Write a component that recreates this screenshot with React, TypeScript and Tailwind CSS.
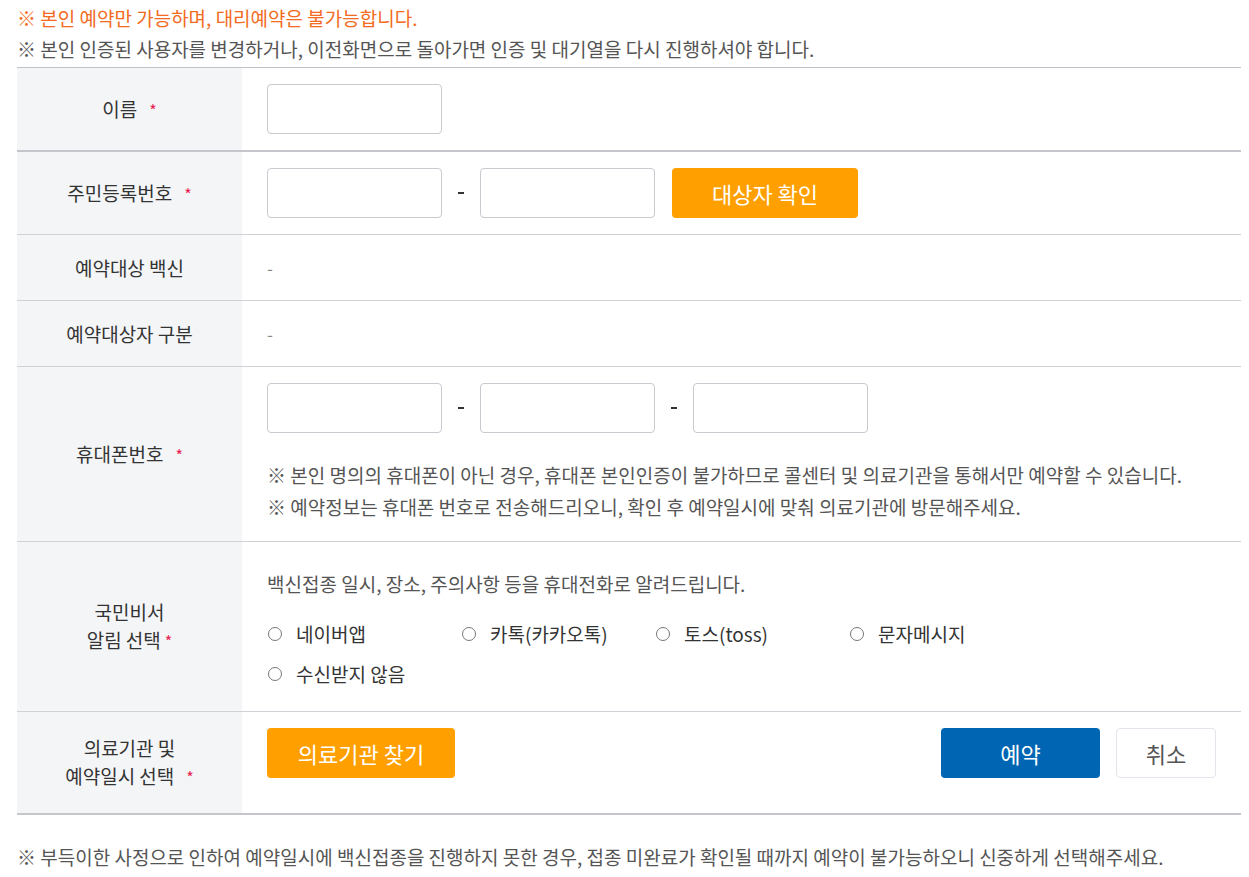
import type { ReactNode } from "react";

const FONT = { fontFamily: '"Noto Sans CJK KR", "Noto Sans", sans-serif' };

function Star() {
  return <span className="ml-3 text-[16px] text-[#e8204f]">*</span>;
}

function Row({
  label,
  children,
  h,
  border = "border-b border-[#cfd1d6]",
  cell = "",
}: {
  label: ReactNode;
  children: ReactNode;
  h: string;
  border?: string;
  cell?: string;
}) {
  return (
    <div className={`flex ${h} ${border}`}>
      <div className="flex w-[225px] shrink-0 items-center justify-center bg-[#f4f5f7] text-center text-[19px] leading-[28px] text-[#333]">
        {label}
      </div>
      <div className={`flex flex-1 flex-col justify-center pl-[25px] ${cell}`}>{children}</div>
    </div>
  );
}

function Input() {
  return <div className="h-[50px] w-[175px] shrink-0 rounded-[4px] border border-[#c8cad0] bg-white" />;
}

function Dash() {
  return (
    <span className="flex w-[38px] justify-center">
      <span className="h-[2px] w-[6px] bg-[#333]" />
    </span>
  );
}

function Radio({ label, w = "w-[194px]" }: { label: string; w?: string }) {
  return (
    <div className={`flex items-center ${w}`}>
      <span className="ml-[1px] h-[14px] w-[14px] rounded-full border border-[#777]" />
      <span className="ml-[14px] text-[19px] text-[#333]">{label}</span>
    </div>
  );
}

export default function App() {
  return (
    <div className="min-h-[877px] bg-white pl-[17px] pr-[8px] pt-[4px]" style={FONT}>
      <p className="text-[19px] leading-[28px] text-[#f26b21]">※ 본인 예약만 가능하며, 대리예약은 불가능합니다.</p>
      <p className="mt-[3px] text-[19px] leading-[28px] text-[#555]">
        ※ 본인 인증된 사용자를 변경하거나, 이전화면으로 돌아가면 인증 및 대기열을 다시 진행하셔야 합니다.
      </p>
      <div className="mt-[4px] w-[1224px] border-t border-[#bfc2c8]">
        <Row label={<span>이름<Star /></span>} h="h-[84px]" border="border-b-2 border-[#c4c6cb]">
          <Input />
        </Row>
        <Row label={<span>주민등록번호<Star /></span>} h="h-[83px]">
          <div className="flex items-center">
            <Input />
            <Dash />
            <Input />
            <button className="ml-[17px] h-[50px] w-[186px] rounded-[4px] bg-[#ff9f00] text-[22px] text-white">
              대상자 확인
            </button>
          </div>
        </Row>
        <Row label="예약대상 백신" h="h-[66px]">
          <span className="text-[17px] text-[#888]">-</span>
        </Row>
        <Row label="예약대상자 구분" h="h-[66px]">
          <span className="text-[17px] text-[#888]">-</span>
        </Row>
        <Row label={<span>휴대폰번호<Star /></span>} h="h-[175px]" cell="!justify-start pt-[16px]">
          <div className="flex items-center">
            <Input />
            <Dash />
            <Input />
            <Dash />
            <Input />
          </div>
          <p className="mt-[26px] text-[19px] leading-[32px] text-[#555]">
            ※ 본인 명의의 휴대폰이 아닌 경우, 휴대폰 본인인증이 불가하므로 콜센터 및 의료기관을 통해서만 예약할 수 있습니다.
          </p>
          <p className="text-[19px] leading-[32px] text-[#555]">
            ※ 예약정보는 휴대폰 번호로 전송해드리오니, 확인 후 예약일시에 맞춰 의료기관에 방문해주세요.
          </p>
        </Row>
        <Row
          label={
            <span>
              국민비서
              <br />
              알림 선택<span className="ml-1 text-[16px] text-[#e8204f]">*</span>
            </span>
          }
          h="h-[170px]"
          cell="!justify-start pt-[28px]"
        >
          <p className="text-[19px] leading-[28px] text-[#555]">백신접종 일시, 장소, 주의사항 등을 휴대전화로 알려드립니다.</p>
          <div className="mt-[22px] flex h-[28px]">
            <Radio label="네이버앱" />
            <Radio label="카톡(카카오톡)" />
            <Radio label="토스(toss)" />
            <Radio label="문자메시지" />
          </div>
          <div className="mt-[12px] flex h-[28px]">
            <Radio label="수신받지 않음" />
          </div>
        </Row>
        <Row
          label={
            <span>
              의료기관 및
              <br />
              예약일시 선택<Star />
            </span>
          }
          h="h-[103px]"
          border="border-b-2 border-[#c4c6cb]"
          cell="!justify-start pt-[16px]"
        >
          <div className="flex items-center pr-[25px]">
            <button className="h-[50px] w-[188px] rounded-[4px] bg-[#ff9f00] text-[22px] text-white">
              의료기관 찾기
            </button>
            <div className="ml-auto flex gap-[16px]">
              <button className="h-[50px] w-[159px] rounded-[4px] bg-[#0066b3] text-[22px] text-white">예약</button>
              <button className="h-[50px] w-[100px] rounded-[4px] border border-[#e3e5ec] bg-white text-[22px] text-[#555]">
                취소
              </button>
            </div>
          </div>
        </Row>
      </div>
      <p className="mt-[28px] text-[19px] leading-[28px] text-[#555]">
        ※ 부득이한 사정으로 인하여 예약일시에 백신접종을 진행하지 못한 경우, 접종 미완료가 확인될 때까지 예약이 불가능하오니 신중하게 선택해주세요.
      </p>
    </div>
  );
}
